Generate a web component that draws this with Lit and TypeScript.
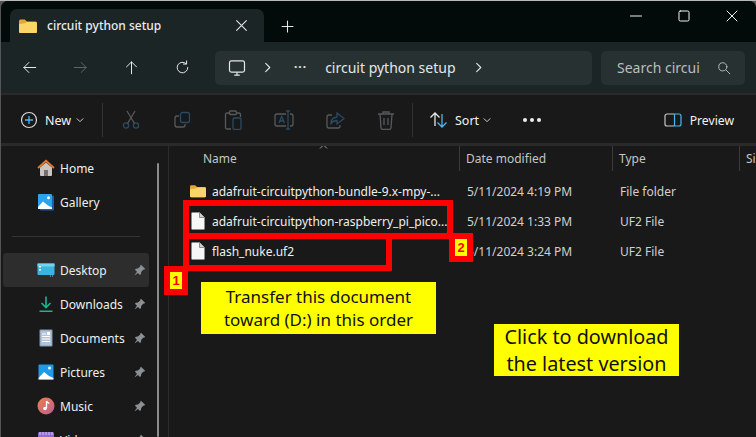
import { LitElement, html, css, svg } from 'lit';
import { customElement } from 'lit/decorators.js';

const BLUE = '#4cb6ee';

const icon = (w: number, body: unknown, cls = '') =>
  html`<svg class=${cls} width=${w} height=${w} viewBox="0 0 24 24" fill="none" stroke="currentColor" stroke-width="1.6" stroke-linecap="round" stroke-linejoin="round">${body}</svg>`;

const chevron = () => icon(11, svg`<path d="M8 3l9 9-9 9" stroke-width="2.400"/>`);

const folder = (w: number, h: number) => html`<svg width=${w} height=${h} viewBox="0 0 18 14">
  <path d="M0 2a1.5 1.5 0 0 1 1.5-1.5h4.2L8 2.500h8.500A1.500 1.500 0 0 1 18 4v8.500a1.500 1.500 0 0 1-1.500 1.500h-15A1.500 1.500 0 0 1 0 12.500z" fill="#e0a92f"/>
  <path d="M0 5l6-.8 2-1.200h8.500A1.500 1.500 0 0 1 18 4.500v8a1.500 1.500 0 0 1-1.500 1.500h-15A1.500 1.500 0 0 1 0 12.500z" fill="#fbd568"/>
</svg>`;

const fileIcon = html`<svg width="14" height="18" viewBox="0 0 14 18">
  <path d="M1.500.5h7l5 5v11a1 1 0 0 1-1 1h-11a1 1 0 0 1-1-1v-15a1 1 0 0 1 1-1z" fill="#f7f7f7" stroke="#8d8d8d"/>
  <path d="M8.500.5v5h5" fill="#d0d0d0" stroke="#8d8d8d"/>
</svg>`;

const pin = html`<svg class="pin" width="12" height="12" viewBox="0 0 12 12">
  <path d="M7 .7l4.300 4.300-1.100.6-1 .1-2 2.300-.2 2-1 1-2-2.100L.8 11.200l-.1-.1L3 7.800.9 5.700l1-1 2-.2 2.300-2 .1-1z" fill="#8b9094"/>
</svg>`;

const navIcons: Record<string, unknown> = {
  home: html`<svg width="18" height="18" viewBox="0 0 18 18">
    <path d="M3 8.500 9 3.500l6 5V16a1 1 0 0 1-1 1H4a1 1 0 0 1-1-1z" fill="#c9c5c2"/>
    <rect x="7" y="11" width="4" height="6" fill="#77706c"/>
    <path d="M1 9 9 1.800 17 9" fill="none" stroke="#e9792a" stroke-width="1.800"/>
  </svg>`,
  gallery: html`<svg width="18" height="18" viewBox="0 0 18 18">
    <rect x="3" y="2.500" width="14" height="15" rx="1" fill="#1a5da8"/>
    <rect x="1" y="1" width="14" height="15" rx="1" fill="#2aa4ee"/>
    <path d="M1 14l5-5.500 5 4 4 2V16H1z" fill="#fff"/>
    <circle cx="11.500" cy="4.800" r="1.500" fill="#fff"/>
  </svg>`,
  desktop: html`<svg width="18" height="18" viewBox="0 0 18 18">
    <rect x="0.500" y="2.500" width="17" height="11.500" rx="1" fill="#39b5e0"/>
    <rect x="0.500" y="2.500" width="17" height="3" fill="#74d3ef"/>
    <rect x="2" y="5" width="2" height="1.500" fill="#fff"/>
    <rect x="2" y="8" width="2" height="1.500" fill="#fff"/>
    <rect x="13" y="14.500" width="1" height="1" fill="#7fc8e8"/>
    <rect x="15" y="14.500" width="1" height="1" fill="#7fc8e8"/>
  </svg>`,
  downloads: html`<svg width="18" height="18" viewBox="0 0 18 18" fill="none" stroke="#1fb28f" stroke-width="1.600">
    <path d="M9 1.500v11M4.500 8 9 12.500 13.500 8M2.500 16.200h13"/>
  </svg>`,
  documents: html`<svg width="18" height="18" viewBox="0 0 18 18">
    <rect x="2.500" y="0.500" width="13" height="17" rx="1" fill="#7f97b3"/>
    <rect x="3.500" y="1.500" width="11" height="15" fill="#b3c4d6"/>
    <path d="M5 5h4M5 7.500h8M5 10h8M5 12.500h8" stroke="#fff" stroke-width="1"/>
    <rect x="10" y="3" width="3" height="3" fill="#fff"/>
  </svg>`,
  pictures: html`<svg width="18" height="18" viewBox="0 0 18 18">
    <rect x="1.500" y="1.500" width="15" height="15" rx="1" fill="#1d9bea"/>
    <path d="M1.500 15l5.500-6 5 4 4.500 2v1.500h-15z" fill="#fff"/>
    <circle cx="12.500" cy="5" r="1.500" fill="#fff"/>
  </svg>`,
  music: html`<svg width="18" height="18" viewBox="0 0 18 18">
    <defs><linearGradient id="mg" x1="0" y1="0" x2="1" y2="1"><stop offset="0" stop-color="#ef7d4f"/><stop offset="1" stop-color="#b9608f"/></linearGradient></defs>
    <circle cx="9" cy="9" r="8.500" fill="url(#mg)"/>
    <path d="M9.500 4v7" stroke="#fff" stroke-width="1.300"/>
    <path d="M9.500 4c.5 1.800 2 2 2.800 2.400" stroke="#fff" stroke-width="1.300" fill="none"/>
    <circle cx="8" cy="11.500" r="1.800" fill="#fff"/>
  </svg>`,
  videos: html`<svg width="18" height="18" viewBox="0 0 18 18">
    <rect x="1" y="1" width="16" height="15" rx="1.500" fill="#8f6bd8"/>
    <path d="M3 1v3M6 1v3M9 1v3M12 1v3M15 1v3" stroke="#d9c9f5" stroke-width="1"/>
  </svg>`,
};

const places = [
  { label: 'Home', key: 'home' },
  { label: 'Gallery', key: 'gallery' },
];
const pinned = [
  { label: 'Desktop', key: 'desktop', active: true },
  { label: 'Downloads', key: 'downloads' },
  { label: 'Documents', key: 'documents' },
  { label: 'Pictures', key: 'pictures' },
  { label: 'Music', key: 'music' },
  { label: 'Videos', key: 'videos' },
];
const files = [
  { name: 'adafruit-circuitpython-bundle-9.x-mpy-...', date: '5/11/2024 4:19 PM', type: 'File folder', dir: true },
  { name: 'adafruit-circuitpython-raspberry_pi_pico...', date: '5/11/2024 1:33 PM', type: 'UF2 File' },
  { name: 'flash_nuke.uf2', date: '5/11/2024 3:24 PM', type: 'UF2 File' },
];

@customElement('app-root')
export class AppRoot extends LitElement {
  static styles = css`
    :host {
      display: block;
      width: 756px;
      height: 437px;
      overflow: hidden;
      position: relative;
      background: linear-gradient(#b9b9b9 1px, #555 1px);
      font-family: 'Noto Sans', 'Open Sans', sans-serif;
      font-size: 12px;
      color: #f2f2f2;
    }
    .window {
      margin: 1px 0 0 1px;
      height: 436px;
      display: flex;
      flex-direction: column;
      background: #191919;
      border-radius: 7px 7px 0 0;
      overflow: hidden;
    }
    .titlebar {
      height: 41px;
      flex: none;
      display: flex;
      align-items: flex-end;
      background: #020a0a;
      padding-left: 9px;
    }
    .tab {
      width: 254px;
      height: 33px;
      box-sizing: border-box;
      display: flex;
      align-items: center;
      padding: 0 16px 0 9px;
      background: #1c2526;
      border-radius: 7px 7px 0 0;
      color: #e8ecec;
      font-weight: 500;
    }
    .tab .title { margin-left: 10px; flex: 1; }
    .tab svg.close { color: #e2e6e6; }
    .plus { margin: 0 0 9px 17px; color: #e6e6e6; display: flex; }
    .caption {
      margin: 0 18px 20px auto;
      display: flex;
      gap: 36px;
      align-items: center;
      color: #f2f2f2;
    }
    .caption svg { display: block; stroke-width: 2; }
    .navbar {
      height: 51px;
      flex: none;
      display: flex;
      align-items: center;
      background: #1c2526;
      border-bottom: 2px solid #2a2a2a;
      padding-left: 21px;
    }
    .navbtns { display: flex; gap: 36px; width: 193px; color: #e6e6e6; }
    .navbtns .off { color: #5f6566; }
    .addr, .search {
      height: 34px;
      box-sizing: border-box;
      background: #283132;
      border-radius: 5px;
      display: flex;
      align-items: center;
    }
    .addr {
      width: 377px;
      margin-right: 9px;
      padding-left: 13px;
      font-size: 14px;
      color: #e3e7e7;
    }
    .addr .crumb { margin: 0 16px 0 0; }
    .addr .dots { font-weight: 700; letter-spacing: 1px; margin: -3px 18px 0 21px; font-size: 12px; }
    .addr .end { margin-left: 17px; display: flex; }
    .search {
      width: 144px;
      padding: 0 14px 0 16px;
      justify-content: space-between;
      font-size: 14px;
      color: #b9bebe;
    }
    .toolbar {
      height: 46px;
      padding: 2px 0 0 19px;
      flex: none;
      display: flex;
      align-items: center;
      background: #191919;
      border-bottom: 3px solid #2a2a2a;
      font-size: 12.500px;
    }
    .new { display: flex; align-items: center; width: 82px; }
    .new .lbl { margin: 0 5px 0 7px; }
    .sep { width: 1px; height: 34px; background: #333; flex: none; }
    .tools { display: flex; width: 309px; padding-left: 16px; gap: 27px; box-sizing: border-box; }
    .tools svg { --g: #565a5b; --b: #2b4a61; }
    .sort { display: flex; align-items: center; margin-left: 16px; width: 94px; }
    .sort .lbl { margin: 0 4px 0 6px; }
    .more { font-weight: 700; display: flex; gap: 3px; }
    .more i { width: 4px; height: 4px; border-radius: 50%; background: #eee; }
    .preview { margin-left: auto; margin-right: 22px; display: flex; align-items: center; gap: 8px; font-size: 12.200px; }
    .body { flex: 1; display: flex; min-height: 0; }
    .side {
      width: 168px;
      flex: none;
      border-right: 1px solid #2c2c2c;
      position: relative;
      padding: 5px 0 0 2px;
      box-sizing: border-box;
    }
    .side .thumb {
      position: absolute;
      left: 156px;
      top: 17px;
      bottom: 0;
      width: 2px;
      background: #8b8b8b;
      border-radius: 1px;
    }
    .item {
      width: 146px;
      height: 34px;
      box-sizing: border-box;
      display: flex;
      align-items: center;
      gap: 5px;
      padding: 0 3px 0 34px;
      border-radius: 3px;
      color: #eef0f0;
      font-size: 12px;
    }
    .item svg { flex: none; }
    .item .pin { margin-left: auto; }
    .item.active { background: #2d2d2d; }
    .rule { height: 1px; width: 128px; background: #333; margin: 17px 0 16px 9px; }
    .main { flex: 1; min-width: 0; }
    .row {
      display: grid;
      grid-template-columns: 290px 153px 127px 1fr;
      align-items: center;
      white-space: nowrap;
      overflow: hidden;
    }
    .head { height: 25px; color: #c3c6c6; position: relative; }
    .head .cell { padding-left: 34px; height: 25px; display: flex; align-items: center; }
    .head .cell + .cell { padding-left: 6px; border-left: 1px solid #3a3a3a; }
    .head .caret { position: absolute; left: 150px; top: -2px; color: #9a9a9a; }
    .rows { padding-top: 5px; }
    .file { height: 30px; color: #cfd1d1; }
    .file .name { display: flex; align-items: center; gap: 6px; padding-left: 21px; color: #eef0f0; }
    .file .ico { width: 16px; display: flex; justify-content: center; }
    .file .cell { padding-left: 8px; }
    .box { position: absolute; border: 6px solid #ff0000; box-sizing: border-box; }
    .b1 { left: 183px; top: 233px; width: 209px; height: 38px; }
    .b2 { left: 183px; top: 200px; width: 270px; height: 39px; }
    .badge {
      position: absolute;
      width: 24px;
      height: 29px;
      box-sizing: border-box;
      border: 6px solid #ff0000;
      background: #ffff00;
      color: #ff0000;
      font-weight: 700;
      font-size: 13px;
      display: flex;
      align-items: center;
      justify-content: center;
      font-family: 'Liberation Sans', sans-serif;
    }
    .n1 { left: 164px; top: 266px; }
    .n2 { left: 449px; top: 233px; }
    .note {
      position: absolute;
      background: #ffff00;
      color: #111;
      text-align: center;
      font-size: 17px;
      line-height: 23px;
      display: flex;
      align-items: center;
      justify-content: center;
      height: 52px;
    }
    .note1 { left: 201px; top: 282px; width: 235px; }
    .note2 { left: 494px; top: 324px; width: 185px; font-size: 19.800px; line-height: 27px; }
  `;

  render() {
    return html`
      <div class="window">
        <div class="titlebar">
          <div class="tab">
            ${folder(18, 14)}
            <span class="title">circuit python setup</span>
            ${icon(13, svg`<path d="M3 3l18 18M21 3 3 21" stroke-width="2"/>`, 'close')}
          </div>
          <span class="plus">${icon(13, svg`<path d="M12 2v20M2 12h20" stroke-width="2"/>`)}</span>
          <div class="caption">
            ${icon(12, svg`<path d="M1 12h22"/>`)}
            ${icon(12, svg`<rect x="2" y="2" width="20" height="20" rx="2.500"/>`)}
            ${icon(12, svg`<path d="M2 2l20 20M22 2 2 22"/>`)}
          </div>
        </div>
        <div class="navbar">
          <div class="navbtns">
            ${icon(15, svg`<path d="M22 12H3M11 4l-8 8 8 8"/>`)}
            ${icon(15, svg`<path d="M2 12h19M13 4l8 8-8 8"/>`, 'off')}
            ${icon(15, svg`<path d="M12 22V3M4 11l8-8 8 8"/>`)}
            ${icon(15, svg`<path d="M20.500 12a8.500 8.500 0 1 1-2.500-6M18.500 1.500V6.500H13.500"/>`)}
          </div>
          <div class="addr">
            ${icon(18, svg`<rect x="2" y="2.500" width="20" height="15" rx="2.500"/><path d="M9 21.500h6M12 18v3"/>`, 'crumb')}
            ${chevron()}
            <span class="dots">···</span>
            <span>circuit python setup</span>
            <span class="end">${chevron()}</span>
          </div>
          <div class="search">
            <span>Search circui</span>
            ${icon(14, svg`<circle cx="10" cy="10" r="7"/><path d="M15.500 15.500 22 22"/>`)}
          </div>
        </div>
        <div class="toolbar">
          <div class="new">
            <svg width="18" height="18" viewBox="0 0 18 18" fill="none">
              <circle cx="9" cy="9" r="7.500" stroke="#d9d9d9" stroke-width="1.200"/>
              <path d="M9 5v8M5 9h8" stroke=${BLUE} stroke-width="1.300"/>
            </svg>
            <span class="lbl">New</span>
            ${icon(8, svg`<path d="M3 8l9 9 9-9" stroke-width="2.500"/>`)}
          </div>
          <div class="sep"></div>
          <div class="tools">
            <svg width="24" height="20" viewBox="0 0 24 20" fill="none" stroke-width="1.300">
              <circle cx="7" cy="15.500" r="2.600" stroke="var(--b)"/><circle cx="17" cy="15.500" r="2.600" stroke="var(--b)"/>
              <path d="M8.500 13.500 16 1M15.500 13.500 8 1" stroke="var(--g)"/>
            </svg>
            <svg width="24" height="20" viewBox="0 0 24 20" fill="none" stroke-width="1.300">
              <rect x="10.500" y="2.500" width="9" height="10" rx="2" stroke="var(--b)"/>
              <path d="M9 6H7a2 2 0 0 0-2 2v7a2 2 0 0 0 2 2h6a2 2 0 0 0 2-2v-1" stroke="var(--g)"/>
            </svg>
            <svg width="24" height="20" viewBox="0 0 24 20" fill="none" stroke-width="1.300">
              <path d="M9 3H6a1.500 1.500 0 0 0-1.500 1.500v13A1.500 1.500 0 0 0 6 19h4M15 3h3a1.500 1.500 0 0 1 1.500 1.500V7" stroke="var(--g)"/>
              <rect x="8.500" y="1" width="7" height="3.500" rx="1" stroke="var(--g)"/>
              <rect x="12" y="8" width="8" height="11.500" rx="1.500" stroke="var(--b)"/>
            </svg>
            <svg width="24" height="20" viewBox="0 0 24 20" fill="none" stroke-width="1.300">
              <path d="M14 4H5a2 2 0 0 0-2 2v8a2 2 0 0 0 2 2h9M18 4h1a2 2 0 0 1 2 2v8a2 2 0 0 1-2 2h-1" stroke="var(--g)"/>
              <path d="M16 1v18M14 1h4M14 19h4M7 13l2.700-6.500L12.400 13M8 11h3.500" stroke="var(--b)"/>
            </svg>
            <svg width="24" height="20" viewBox="0 0 24 20" fill="none" stroke-width="1.300">
              <path d="M9 5H6a2 2 0 0 0-2 2v9a2 2 0 0 0 2 2h9a2 2 0 0 0 2-2v-1" stroke="var(--g)"/>
              <path d="M14 3l7 5.500-7 5.500v-3.500c-3 0-4.500 1-6 3 0-4 2.500-6 6-6.500z" stroke="var(--b)"/>
            </svg>
            <svg width="24" height="20" viewBox="0 0 24 20" fill="none" stroke="var(--g)" stroke-width="1.300">
              <path d="M4 4h16M9 4V2h6v2M6 4l1 14a1.500 1.500 0 0 0 1.500 1.300h7A1.500 1.500 0 0 0 17 18l1-14M10 8v7M14 8v7"/>
            </svg>
          </div>
          <div class="sep"></div>
          <div class="sort">
            <svg width="20" height="18" viewBox="0 0 20 18" fill="none" stroke-width="1.300">
              <path d="M6 15V2M1.500 6.500 6 2l4.500 4.500" stroke="#e6e6e6"/>
              <path d="M13 3v13M8.500 11.500 13 16l4.500-4.500" stroke=${BLUE}/>
            </svg>
            <span class="lbl">Sort</span>
            ${icon(8, svg`<path d="M3 8l9 9 9-9" stroke-width="2.500"/>`)}
          </div>
          <div class="more"><i></i><i></i><i></i></div>
          <div class="preview">
            <svg width="18" height="14" viewBox="0 0 18 14" fill="none" stroke-width="1.200">
              <path d="M10 1H3a2 2 0 0 0-2 2v8a2 2 0 0 0 2 2h7" stroke="#c5c5c5"/>
              <path d="M10.500 1H15a2 2 0 0 1 2 2v8a2 2 0 0 1-2 2h-4.500zM10.500 1v12" stroke=${BLUE}/>
            </svg>
            <span>Preview</span>
          </div>
        </div>
        <div class="body">
          <div class="side">
            <div class="thumb"></div>
            ${places.map((p) => this.renderItem(p))}
            <div class="rule"></div>
            ${pinned.map((p) => this.renderItem(p, true))}
          </div>
          <div class="main">
            <div class="row head">
              <div class="cell">Name</div>
              <div class="cell">Date modified</div>
              <div class="cell">Type</div>
              <div class="cell">Size</div>
              <svg class="caret" width="9" height="5" viewBox="0 0 9 5" fill="none" stroke="currentColor"><path d="M1 4.500 4.500 1 8 4.500"/></svg>
            </div>
            <div class="rows">
              ${files.map(
                (f) => html`<div class="row file">
                  <div class="name">
                    <span class="ico">${f.dir ? folder(17, 14) : fileIcon}</span>
                    <span>${f.name}</span>
                  </div>
                  <div class="cell">${f.date}</div>
                  <div class="cell">${f.type}</div>
                  <div></div>
                </div>`
              )}
            </div>
          </div>
        </div>
      </div>
      <div class="box b2"></div>
      <div class="box b1"></div>
      <div class="badge n1">1</div>
      <div class="badge n2">2</div>
      <div class="note note1"><span>Transfer this document<br />toward (D:) in this order</span></div>
      <div class="note note2"><span>Click to download<br />the latest version</span></div>
    `;
  }

  renderItem(p: { label: string; key: string; active?: boolean }, pinnedItem = false) {
    return html`<div class="item ${p.active ? 'active' : ''}">
      ${navIcons[p.key]}
      <span>${p.label}</span>
      ${pinnedItem ? pin : ''}
    </div>`;
  }
}
